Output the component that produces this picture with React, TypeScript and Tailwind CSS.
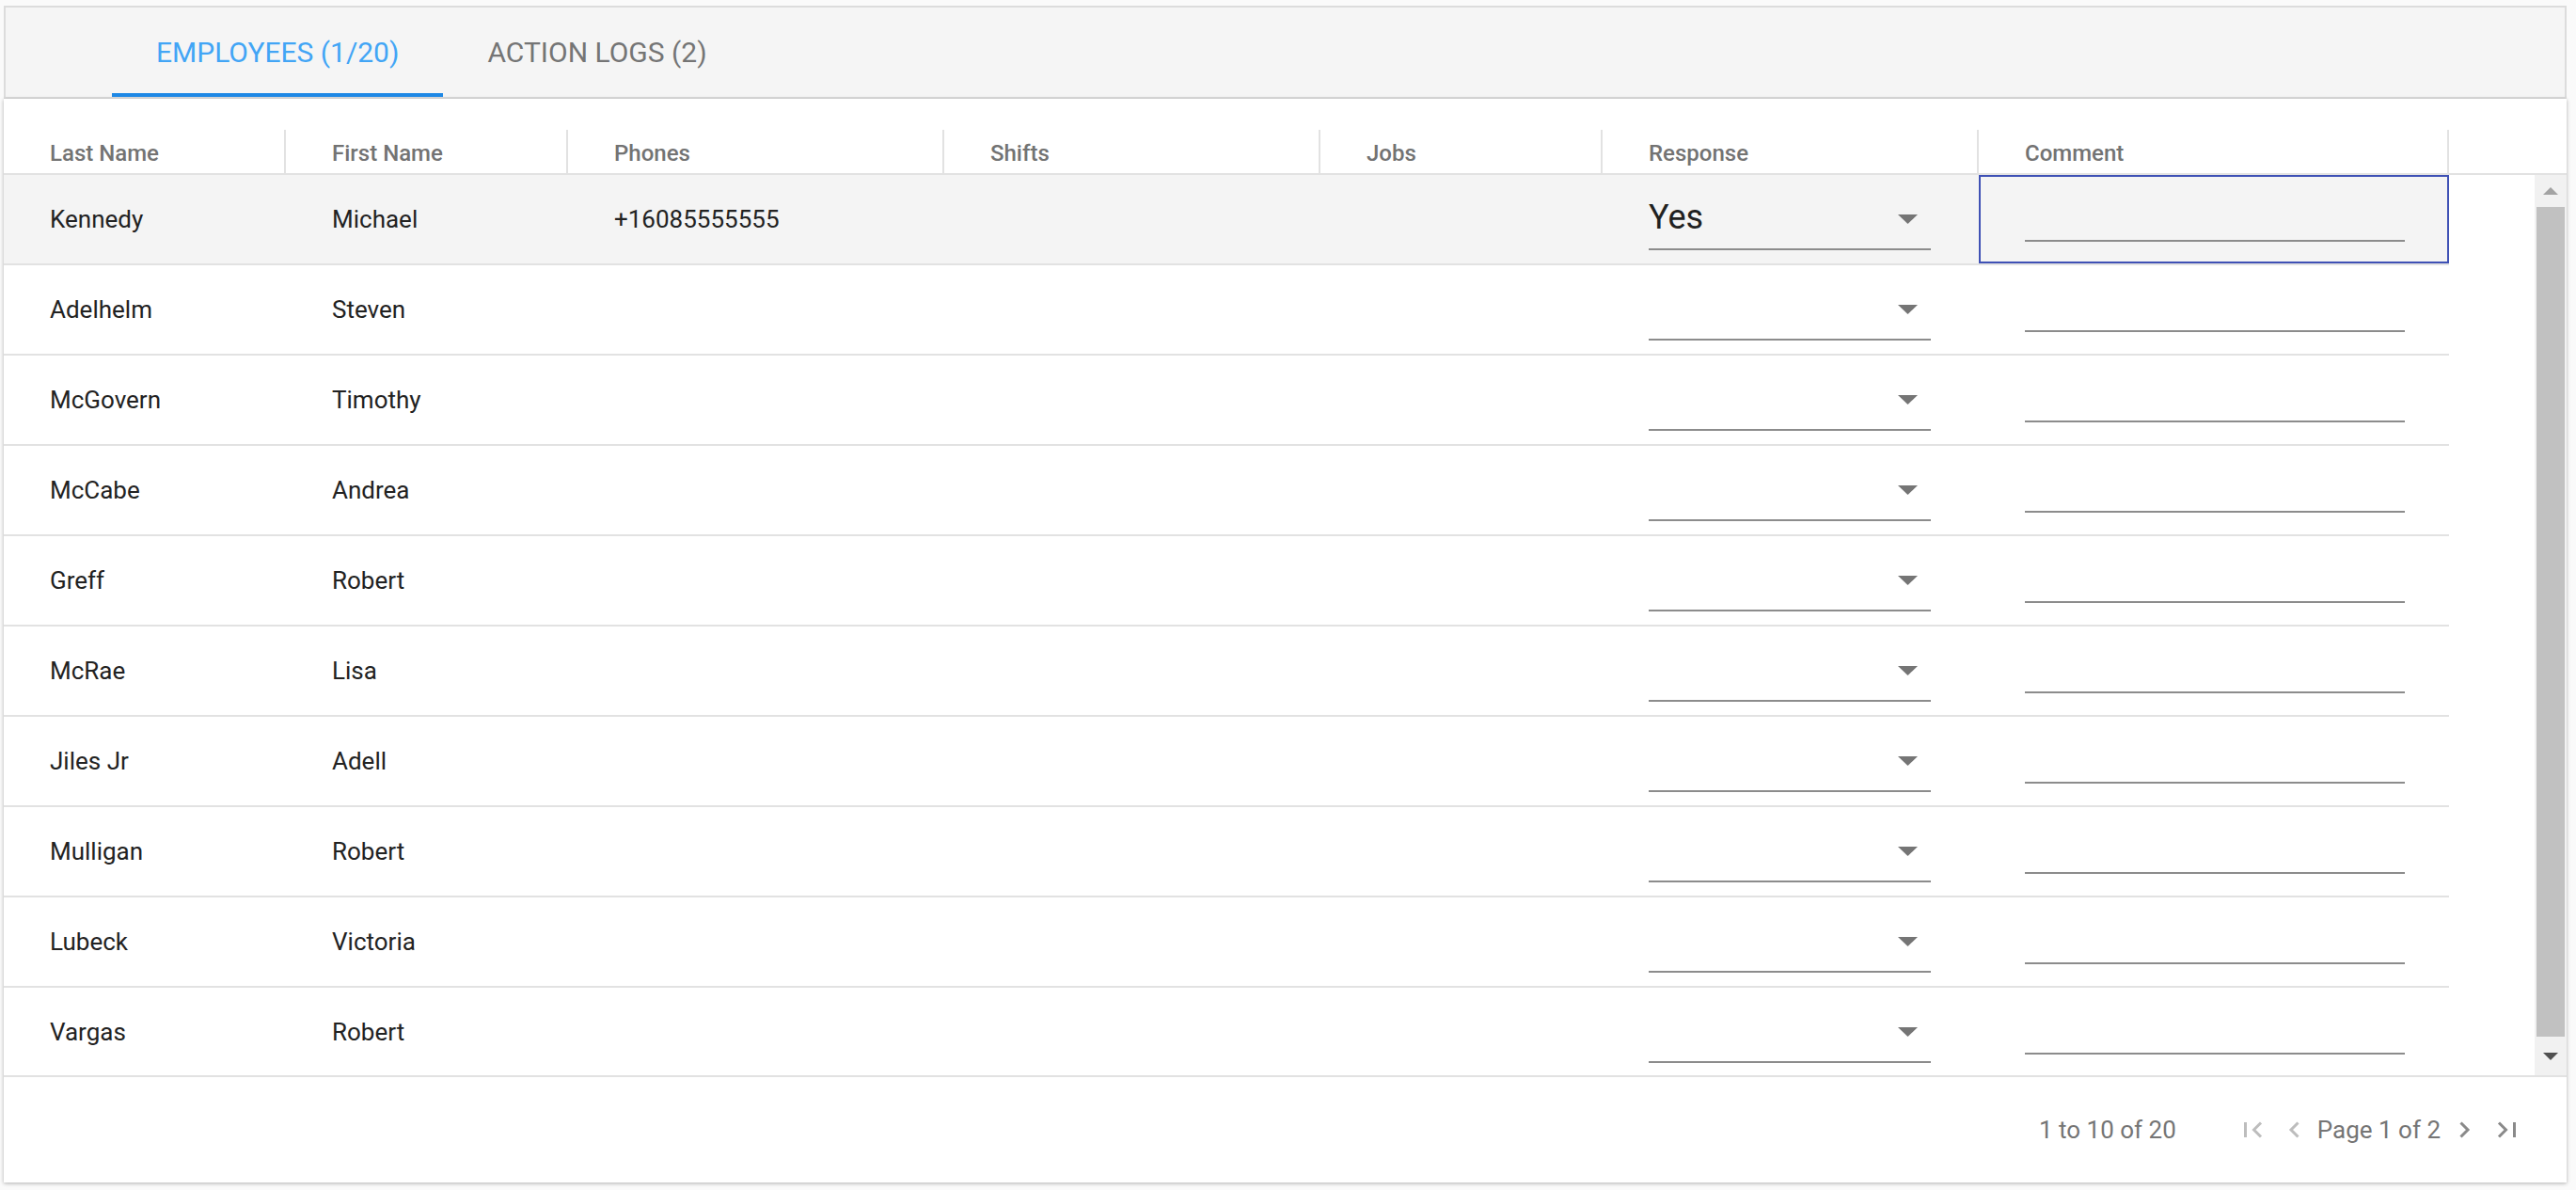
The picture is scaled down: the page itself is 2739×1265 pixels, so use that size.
import React from 'react'

const columns = [
  { label: 'Last Name', width: 'w-[300px]' },
  { label: 'First Name', width: 'w-[300px]' },
  { label: 'Phones', width: 'w-[400px]' },
  { label: 'Shifts', width: 'w-[400px]' },
  { label: 'Jobs', width: 'w-[300px]' },
  { label: 'Response', width: 'w-[400px]' },
  { label: 'Comment', width: 'w-[500px]' },
]

const employees = [
  { last: 'Kennedy', first: 'Michael', phone: '+16085555555', response: 'Yes' },
  { last: 'Adelhelm', first: 'Steven', phone: '', response: '' },
  { last: 'McGovern', first: 'Timothy', phone: '', response: '' },
  { last: 'McCabe', first: 'Andrea', phone: '', response: '' },
  { last: 'Greff', first: 'Robert', phone: '', response: '' },
  { last: 'McRae', first: 'Lisa', phone: '', response: '' },
  { last: 'Jiles Jr', first: 'Adell', phone: '', response: '' },
  { last: 'Mulligan', first: 'Robert', phone: '', response: '' },
  { last: 'Lubeck', first: 'Victoria', phone: '', response: '' },
  { last: 'Vargas', first: 'Robert', phone: '', response: '' },
]

function Caret() {
  return (
    <svg width="21" height="10" viewBox="0 0 21 10" className="mt-[20px] mr-[14px] shrink-0">
      <polygon points="0,0 21,0 10.5,10" fill="#757575" />
    </svg>
  )
}

function FirstIcon({ color }: { color: string }) {
  return (
    <svg width="20" height="18" viewBox="0 0 20 18" fill="none" stroke={color} strokeWidth="3">
      <path d="M1.5 1 V17" />
      <path d="M18 1.5 L10.5 9 L18 16.5" />
    </svg>
  )
}

function LastIcon({ color }: { color: string }) {
  return (
    <svg width="20" height="18" viewBox="0 0 20 18" fill="none" stroke={color} strokeWidth="3">
      <path d="M18.5 1 V17" />
      <path d="M2 1.5 L9.5 9 L2 16.5" />
    </svg>
  )
}

function Chevron({ color, dir }: { color: string; dir: 'left' | 'right' }) {
  return (
    <svg width="12" height="18" viewBox="0 0 12 18" fill="none" stroke={color} strokeWidth="3">
      {dir === 'left' ? <path d="M10.5 1.5 L3 9 L10.5 16.5" /> : <path d="M1.5 1.5 L9 9 L1.5 16.5" />}
    </svg>
  )
}

export default function App() {
  return (
    <div className="min-h-screen bg-[#fafafa] pt-[6px] pl-[4px] pr-[10px] font-['Roboto',sans-serif]">
      {/* tabs */}
      <div className="flex h-[99px] border-2 border-[#dcdcdc] bg-[#f5f5f5] pl-[113px]">
        <div className="flex items-center px-[47px] pt-[4px] border-b-4 border-[#1e88e5] text-[30px] text-[#42a5f5] uppercase">
          Employees (1/20)
        </div>
        <div className="flex items-center px-[47px] pt-[4px] border-b-4 border-transparent text-[30px] text-[#757575] uppercase">
          Action Logs (2)
        </div>
      </div>

      <div className="bg-white shadow-[0_1px_4px_rgba(0,0,0,0.3)]">
        {/* header */}
        <div className="flex h-[81px] items-end border-b-2 border-[#e2e2e2]">
          {columns.map((c) => (
            <div
              key={c.label}
              className={`${c.width} h-[46px] flex items-center pl-[49px] pt-[4px] border-r-2 border-[#e2e2e2] text-[24px] font-medium text-[#737373]`}
            >
              {c.label}
            </div>
          ))}
        </div>

        {/* body */}
        <div className="flex h-[957px] overflow-hidden">
          <div className="w-[2600px] shrink-0">
            {employees.map((e, i) => (
              <div
                key={e.last}
                className={`flex h-[96px] border-b-2 border-[#e2e2e2] text-[26px] text-[#222222] ${i === 0 ? 'bg-[#f4f4f4]' : ''}`}
              >
                <div className="w-[300px] flex items-center pl-[49px]">{e.last}</div>
                <div className="w-[300px] flex items-center pl-[49px]">{e.first}</div>
                <div className="w-[400px] flex items-center pl-[49px]">{e.phone}</div>
                <div className="w-[400px]" />
                <div className="w-[300px]" />
                <div className="w-[400px] pl-[49px]">
                  <div className="mt-[22px] h-[58px] w-[300px] flex justify-between items-start border-b-2 border-[#8c8c8c]">
                    <span className="pt-[2px] text-[36px] leading-[42px] text-[#212121]">{e.response}</span>
                    <Caret />
                  </div>
                </div>
                <div className={`w-[500px] pl-[49px] ${i === 0 ? 'shadow-[inset_0_0_0_2px_#3f51b5]' : ''}`}>
                  <div className="mt-[31px] h-[40px] w-[404px] border-b-2 border-[#8c8c8c]" />
                </div>
              </div>
            ))}
          </div>
          <div className="flex-1" />
          {/* scrollbar */}
          <div className="w-[34px] flex flex-col bg-[#f1f1f1]">
            <div className="h-[34px] flex items-center justify-center">
              <svg width="16" height="8" viewBox="0 0 16 8">
                <polygon points="8,0 16,8 0,8" fill="#a3a3a3" />
              </svg>
            </div>
            <div className="flex-1 mx-[2px] bg-[#c1c1c1]" />
            <div className="h-[41px] flex items-center justify-center">
              <svg width="16" height="8" viewBox="0 0 16 8">
                <polygon points="0,0 16,0 8,8" fill="#505050" />
              </svg>
            </div>
          </div>
        </div>

        {/* footer */}
        <div className="flex h-[114px] items-center justify-end border-t-2 border-[#e2e2e2] pr-[54px] text-[26px] text-[#757575]">
          <span>1 to 10 of 20</span>
          <span className="ml-[72px] flex"><FirstIcon color="#bdbdbd" /></span>
          <span className="ml-[27px] flex"><Chevron color="#bdbdbd" dir="left" /></span>
          <span className="ml-[19px]">Page 1 of 2</span>
          <span className="ml-[20px] flex"><Chevron color="#8a8a8a" dir="right" /></span>
          <span className="ml-[28px] flex"><LastIcon color="#8a8a8a" /></span>
        </div>
      </div>
    </div>
  )
}
